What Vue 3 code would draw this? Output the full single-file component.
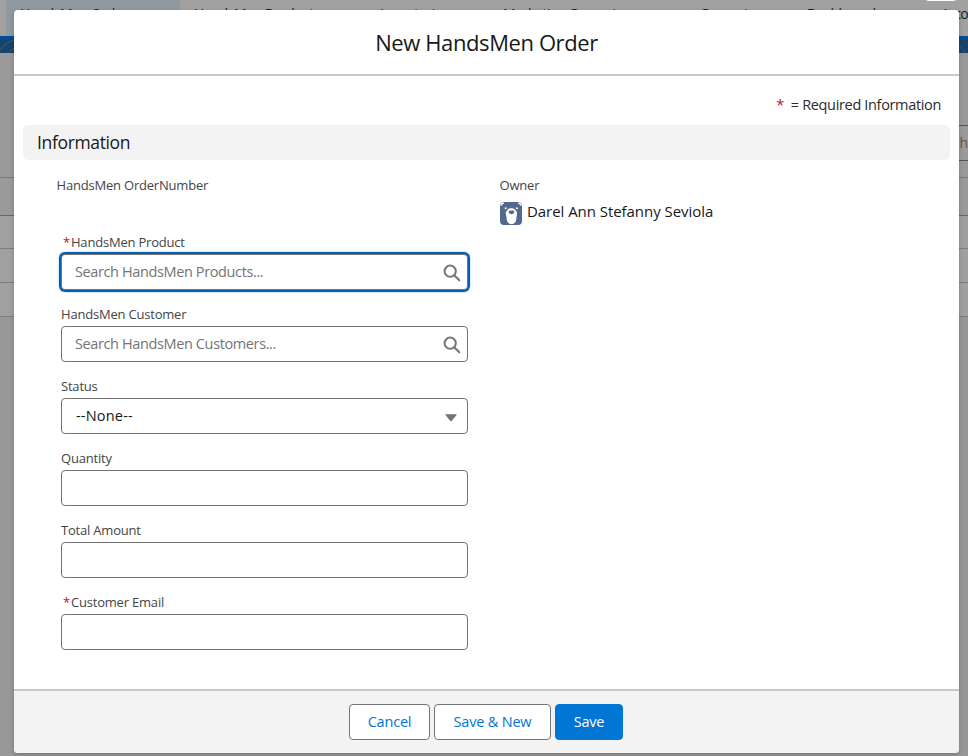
<script setup>
import { ref } from 'vue'

const tabs = [
  { label: 'HandsMen Orders', active: true, cls: 't-orders' },
  { label: 'HandsMen Products', cls: 't-products' },
  { label: 'Inventories', cls: 't-inventories' },
  { label: 'Marketing Campaigns', cls: 't-marketing' },
  { label: 'Campaigns', cls: 't-campaigns' },
  { label: 'Dashboards', cls: 't-dashboards' },
  { label: 'Acco', cls: 't-accounts' },
]

const fields = ref([
  { id: 'product', label: 'HandsMen Product', required: true, type: 'lookup', placeholder: 'Search HandsMen Products...', focused: true },
  { id: 'customer', label: 'HandsMen Customer', type: 'lookup', placeholder: 'Search HandsMen Customers...' },
  { id: 'status', label: 'Status', type: 'select', value: '--None--' },
  { id: 'quantity', label: 'Quantity', type: 'text' },
  { id: 'amount', label: 'Total Amount', type: 'text' },
  { id: 'email', label: 'Customer Email', required: true, type: 'text' },
])
</script>

<template>
  <div class="screen">
    <div class="page">
      <nav class="nav">
        <span v-for="t in tabs" :key="t.label" class="tab" :class="[t.cls, { active: t.active }]">{{ t.label }}</span>
      </nav>
      <div class="band">
        <svg width="14" height="15" viewBox="0 0 14 15"><path d="M0 11Q5 5 13 2M9 14L14 10" fill="none" stroke="#3b6181" /></svg>
        <svg width="9" height="15" viewBox="0 0 9 15"><path d="M0 6Q2 12 6 14" fill="none" stroke="#315d82" /></svg>
      </div>
      <div class="list-head"></div>
      <div class="list-search"><span>h</span></div>
      <div class="list-gap"></div>
      <div class="row head"></div>
      <div class="row r1"></div>
      <div class="row r2"></div>
      <div class="row r2"></div>
      <div class="row r2"></div>
    </div>
    <div class="close-edge"></div>

    <section class="modal" role="dialog">
      <header class="modal-head"><h2><span>New HandsMen Order</span></h2></header>
      <div class="modal-body">
        <p class="legend"><b class="star">*</b><span>= Required Information</span></p>
        <h3><span>Information</span></h3>
        <div class="columns">
          <div class="col left">
            <div class="static-label order-number">HandsMen OrderNumber</div>
            <div class="fields">
              <div v-for="f in fields" :key="f.id" class="field">
                <label :class="{ required: f.required }"><b v-if="f.required" class="star">*</b><span>{{ f.label }}</span></label>
                <div class="control" :class="{ focused: f.focused }">
                  <span v-if="f.type === 'lookup'" class="placeholder">{{ f.placeholder }}</span>
                  <span v-else-if="f.type === 'select'" class="value">{{ f.value }}</span>
                  <svg v-if="f.type === 'lookup'" class="search" width="18" height="18" viewBox="0 0 18 18">
                    <circle cx="7.2" cy="7.2" r="5.6" fill="none" stroke="#747474" stroke-width="2" />
                    <path d="M11.4 11.4L16.3 16.3" stroke="#747474" stroke-width="2.1" stroke-linecap="round" />
                  </svg>
                  <svg v-else-if="f.type === 'select'" class="arrow" width="12" height="8" viewBox="0 0 12 8">
                    <path d="M.8.3H11.2Q12 .5 11.4 1.2L6.6 7Q6 7.6 5.4 7L.6 1.2Q0 .5.8.3Z" fill="#747474" />
                  </svg>
                </div>
              </div>
            </div>
          </div>
          <div class="col right">
            <div class="static-label owner">Owner</div>
            <div class="person">
              <svg width="22" height="23" viewBox="0 0 22 23">
                <rect width="22" height="23" rx="4" fill="#54698d" />
                <path d="M1 3.8Q1.3 1.2 3.8 1M18.2 1Q20.7 1.2 21 3.8" fill="none" stroke="#fff" stroke-width="1.3" />
                <circle cx="5.7" cy="6.3" r="1" fill="#fff" /><circle cx="16.9" cy="6.3" r="1" fill="#fff" />
                <path d="M11.3 6.2C8.2 6.2 7.3 8.2 6 10C5.2 12 6.7 14 6.7 17C6.8 20.3 9 22.2 11.5 22.2C14.2 22.2 16.1 20.3 16.3 17C16.4 14.2 17.6 12 16.8 10C15.5 8.2 14.6 6.2 11.3 6.2Z" fill="#fff" />
                <path d="M8.6 9.8C8.6 8.2 14.4 8.2 14.4 9.8C14.4 11.2 12.7 12.2 11.5 12.2C10.3 12.2 8.6 11.2 8.6 9.8Z" fill="#54698d" />
              </svg>
              <span>Darel Ann Stefanny Seviola</span>
            </div>
          </div>
        </div>
      </div>
      <footer class="modal-foot">
        <button class="cancel">Cancel</button>
        <button class="save-new">Save &amp; New</button>
        <button class="save">Save</button>
      </footer>
    </section>
  </div>
</template>

<style>
body { margin: 0; overflow: hidden; }
</style>

<style scoped>
* { box-sizing: border-box; }
.screen { position: relative; width: 968px; height: 756px; overflow: hidden; background: #9a9a9a; font-family: "Segoe UI", "Open Sans", "Noto Sans", sans-serif; font-size: 14px; color: #181818; }
.page { height: 100%; display: flex; flex-direction: column; }
.nav { height: 36px; flex: none; display: flex; padding-left: 6px; background: #a1a1a1; overflow: hidden; white-space: nowrap; }
.tab { flex: none; padding-left: 14px; line-height: 28px; font-size: 14px; letter-spacing: -.4px; }
.tab.active { background: #8f999f; }
.t-orders { width: 174px; }
.t-products { width: 186px; }
.t-inventories { width: 123px; }
.t-marketing { width: 197px; }
.t-campaigns { width: 107px; }
.t-dashboards { width: 136px; }
.t-accounts { width: 39px; padding-left: 12px; letter-spacing: -1px; }
.band { height: 17px; flex: none; display: flex; justify-content: space-between; align-items: flex-end; border-top: 3px solid #014e93; background: #1a4369; }
.band svg { display: block; }
.list-head { height: 72px; flex: none; }
.list-search { width: 20px; height: 36px; flex: none; align-self: flex-end; border-top: 1px solid #555; border-bottom: 1px solid #555; text-align: right; line-height: 34px; color: #6a5848; }
.list-gap { height: 16px; flex: none; }
.row { flex: none; border-top: 1px solid #7b7b7b; background: #a0a0a0; }
.row.head { height: 38px; background: #9a9a9a; }
.r1 { height: 33px; border-top-color: #666; }
.r2 { height: 34px; }
.r2:last-child { background: #989898; height: auto; flex: 1; }
.close-edge { position: absolute; left: 925px; top: -7px; width: 32px; height: 8px; border-radius: 4px; background: #fff; }

.modal { position: absolute; left: 14px; top: 10px; width: 945px; height: 743px; display: flex; flex-direction: column; border-radius: 4px; overflow: hidden; background: #fff; box-shadow: 0 2px 5px rgba(0, 0, 0, .2); }
.modal-head { height: 66px; flex: none; border-bottom: 2px solid #c9c9c9; text-align: center; }
h2 { margin: 0; font-weight: 400; font-size: 22px; line-height: 65px; letter-spacing: -.4px; }
.modal-body { flex: 1; padding: 18px 9px 0; }
.legend { height: 22px; margin: 0; padding-right: 9px; display: flex; justify-content: flex-end; gap: 7px; line-height: 22px; font-size: 14.5px; letter-spacing: -.34px; color: #2b2b2b; }
.star { color: #c8102e; font-weight: 400; }
h3 { height: 35px; margin: 9px 0 0; padding-left: 14px; border-radius: 5px; background: #f3f3f3; font-size: 17.5px; font-weight: 400; line-height: 35px; letter-spacing: -.35px; }
.columns { display: flex; }
.col.left { width: 443px; padding: 14px 0 0 34px; }
.col.right { padding: 14px 0 0 34px; }
.static-label { height: 22px; line-height: 22px; font-size: 13px; letter-spacing: -.2px; color: #444; }
.order-number, .owner { margin-left: -.5px; }
.fields { display: flex; flex-direction: column; gap: 12px; margin: 34px 0 0 4px; width: 407px; }
.field label { display: flex; gap: 1px; height: 24px; line-height: 24px; font-size: 13px; letter-spacing: -.2px; color: #444; }
.field label.required { padding-left: 2px; }
.control { height: 36px; display: flex; align-items: center; justify-content: space-between; padding: 0 6px 0 13px; border: 1px solid #747474; border-radius: 4px; background: #fff; font-size: 14.5px; }
.control.focused { box-shadow: 0 0 0 2px #0b5cab, 0 0 3px 1px #0176d3; }
.placeholder { margin-top: -2px; color: #747474; letter-spacing: -.38px; }
.value { margin-top: -2px; padding-left: 1px; letter-spacing: .2px; }
.search { display: block; margin-top: 2px; }
.arrow { margin: 3px 4px 0 0; }
.person { display: flex; align-items: center; gap: 5px; height: 24px; margin-top: 5px; font-size: 15px; letter-spacing: -.05px; }
.person svg { margin-top: 1px; }
.person span { line-height: 20px; margin-top: -4px; }
.modal-foot { height: 64px; flex: none; display: flex; gap: 4px; padding: 13px 0 0 335px; border-top: 2px solid #c9c9c9; background: #f3f3f3; }
button { height: 36px; padding: 0; border: 1px solid #747474; border-radius: 4px; background: #fff; color: #0176d3; font: 14.5px/34px "Segoe UI", "Open Sans", "Noto Sans", sans-serif; letter-spacing: -.2px; white-space: nowrap; }
.cancel { width: 81px; }
.save-new { width: 117px; }
.save { width: 68px; border-color: #0176d3; background: #0176d3; color: #fff; }
</style>
